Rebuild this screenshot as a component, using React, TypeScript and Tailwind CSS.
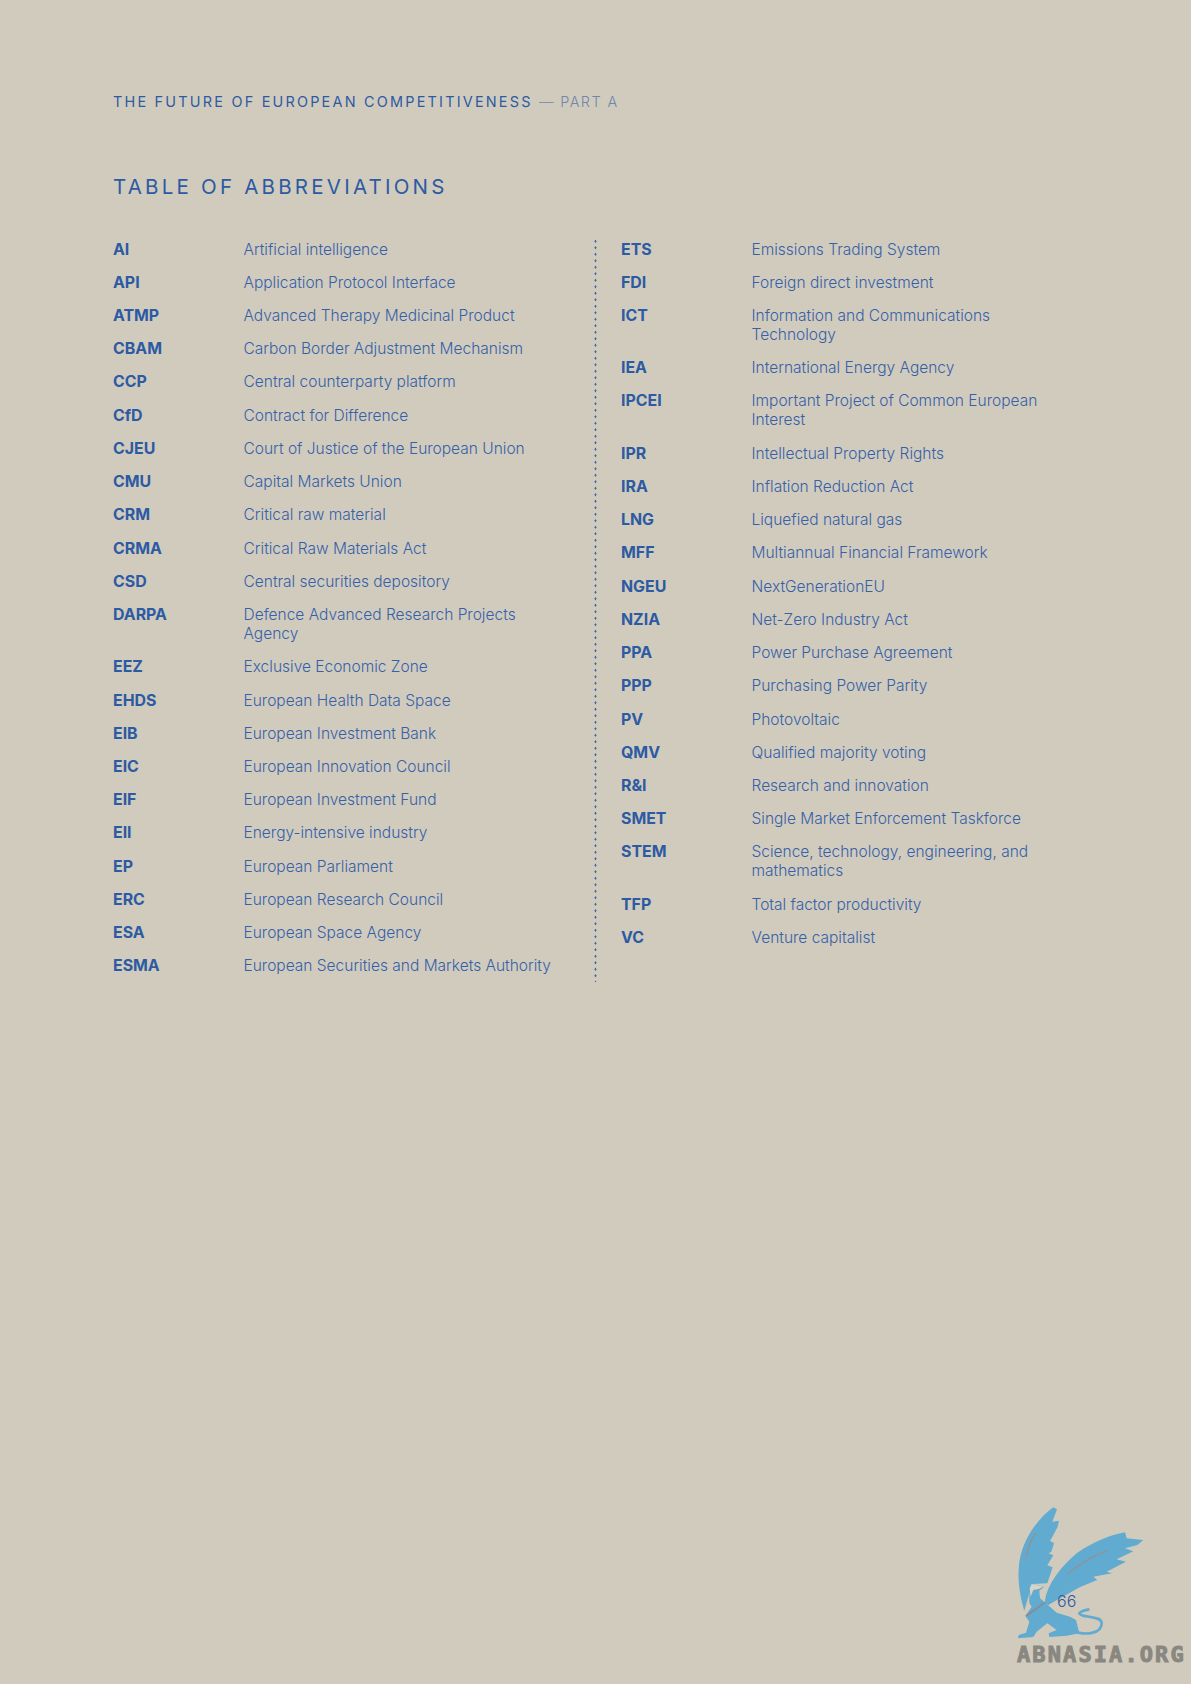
const left: [string, string][] = [
  ["AI", "Artificial intelligence"],
  ["API", "Application Protocol Interface"],
  ["ATMP", "Advanced Therapy Medicinal Product"],
  ["CBAM", "Carbon Border Adjustment Mechanism"],
  ["CCP", "Central counterparty platform"],
  ["CfD", "Contract for Difference"],
  ["CJEU", "Court of Justice of the European Union"],
  ["CMU", "Capital Markets Union"],
  ["CRM", "Critical raw material"],
  ["CRMA", "Critical Raw Materials Act"],
  ["CSD", "Central securities depository"],
  ["DARPA", "Defence Advanced Research Projects Agency"],
  ["EEZ", "Exclusive Economic Zone"],
  ["EHDS", "European Health Data Space"],
  ["EIB", "European Investment Bank"],
  ["EIC", "European Innovation Council"],
  ["EIF", "European Investment Fund"],
  ["EII", "Energy-intensive industry"],
  ["EP", "European Parliament"],
  ["ERC", "European Research Council"],
  ["ESA", "European Space Agency"],
  ["ESMA", "European Securities and Markets Authority"],
];

const right: [string, string][] = [
  ["ETS", "Emissions Trading System"],
  ["FDI", "Foreign direct investment"],
  ["ICT", "Information and Communications Technology"],
  ["IEA", "International Energy Agency"],
  ["IPCEI", "Important Project of Common European Interest"],
  ["IPR", "Intellectual Property Rights"],
  ["IRA", "Inflation Reduction Act"],
  ["LNG", "Liquefied natural gas"],
  ["MFF", "Multiannual Financial Framework"],
  ["NGEU", "NextGenerationEU"],
  ["NZIA", "Net-Zero Industry Act"],
  ["PPA", "Power Purchase Agreement"],
  ["PPP", "Purchasing Power Parity"],
  ["PV", "Photovoltaic"],
  ["QMV", "Qualified majority voting"],
  ["R&I", "Research and innovation"],
  ["SMET", "Single Market Enforcement Taskforce"],
  ["STEM", "Science, technology, engineering, and mathematics"],
  ["TFP", "Total factor productivity"],
  ["VC", "Venture capitalist"],
];

function Rows({ items, width }: { items: [string, string][]; width: string }) {
  return (
    <div className="flex flex-col gap-[14.24px]">
      {items.map(([a, d]) => (
        <div key={a} className="flex leading-[19px]">
          <div className="w-[130.5px] shrink-0 text-[15.9px] font-bold text-[#2c5aa3]">{a}</div>
          <div className={`${width} text-[15.5px] font-light text-[#3561a9]`}>{d}</div>
        </div>
      ))}
    </div>
  );
}

function Griffin() {
  return (
    <svg viewBox="0 0 600 582" className="absolute left-[990px] top-[1490px] h-[194px] w-[200px]">
      <g fill="#62abd0">
        <path d="M103 362 C90 320 82 270 87 225 C92 170 125 100 190 52 L201 58 L187 95 L207 92 L203 110 L185 145 L180 152 L192 160 L184 185 L176 190 L190 196 L172 226 L188 232 L178 262 L172 280 L130 282 L118 310 Z" />
        <path d="M165 340 C165 300 200 240 260 190 C310 155 360 135 405 127 L410 145 L460 150 L442 165 L405 175 L430 184 L380 208 L408 215 L350 245 L366 250 L310 260 L322 270 L272 290 L222 318 L175 345 Z" />
        <path d="M118 300 L125 282 L162 290 L148 302 L150 325 L168 340 L200 368 L240 380 L258 390 L268 430 L230 437 L178 441 L176 430 L200 420 L172 400 L140 425 L130 441 L84 445 L86 435 L108 428 L118 395 L106 378 L125 350 L118 340 Z" />
      </g>
      <path d="M240 420 C290 440 335 430 335 400 C335 375 275 385 268 370 C272 362 285 360 298 358" fill="none" stroke="#62abd0" strokeWidth="8" />
      <path d="M119 295 L125 282 L160 290 L146 297 L130 300 L122 320 Z" fill="#d6d3c8" />
      <path d="M108 378 L165 337" fill="none" stroke="#8b8a8f" strokeWidth="5" />
      <path d="M108 205 C112 180 122 150 138 128" fill="none" stroke="#8f9298" strokeWidth="4" />
      <path d="M232 252 C265 225 305 200 350 182" fill="none" stroke="#8f9298" strokeWidth="4" />
    </svg>
  );
}

export default function App() {
  return (
    <div className="relative min-h-[1684px] w-full overflow-hidden bg-[#d1cbbd] px-[113px] pt-[93px] font-['Inter','Liberation_Sans',sans-serif]">
      <div className="text-[14.4px] leading-[18px] tracking-[0.155em] text-[#2c5aa3]">
        THE FUTURE OF EUROPEAN COMPETITIVENESS{" "}
        <span className="font-light tracking-[0.1em] text-[#6f87ab]">— PART A</span>
      </div>
      <h1 className="mt-[62.5px] text-[20.5px] font-normal leading-[26px] tracking-[0.157em] text-[#2c5aa3]">
        TABLE OF ABBREVIATIONS
      </h1>
      <div className="mt-[38px] flex">
        <div className="w-[481px] shrink-0 pt-[2px]">
          <Rows items={left} width="w-[325px]" />
        </div>
        <div className="h-[744px] w-[3px] shrink-0 bg-[radial-gradient(circle,#3a63a8_0.9px,transparent_1.2px)] bg-[length:3px_6.5px]" />
        <div className="ml-[24px] pt-[2px]">
          <Rows items={right} width="w-[300px]" />
        </div>
      </div>
      <Griffin />
      <div className="absolute left-[1057px] top-[1591px] text-[16px] font-light leading-[20px] text-[#2c5aa3]">66</div>
      <div className="absolute left-[1017px] top-[1642px] font-['DejaVu_Sans_Mono',monospace] text-[22px] font-bold leading-[26px] tracking-[2.1px] text-[#8a8781] [-webkit-text-stroke:1px_#8a8781]">
        ABNASIA.ORG
      </div>
    </div>
  );
}
